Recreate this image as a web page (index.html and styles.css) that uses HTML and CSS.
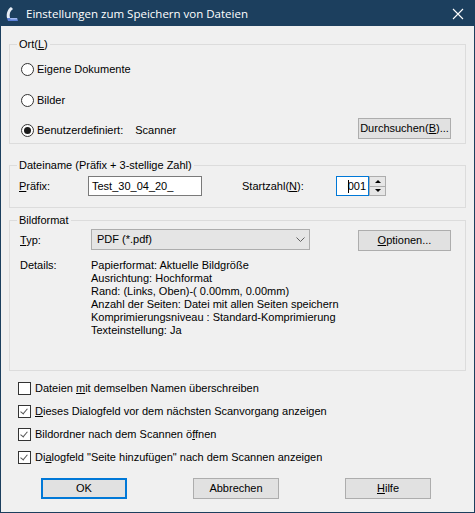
FILE: index.html
```html
<!DOCTYPE html>
<html lang="de">
  <head>
    <meta charset="UTF-8" />
    <meta name="viewport" content="width=device-width, initial-scale=1.0" />
    <title>Einstellungen zum Speichern von Dateien</title>
    <link rel="stylesheet" href="styles.css">
  </head>
  <body>
    <div class="window">
      <div class="titlebar">
        <svg class="app-icon" width="14" height="16" viewBox="0 0 14 16">
          <path d="M6 1 C3 3 1 7 2 12 L5 12 C4 8 5 5 8 3 Z" fill="#e8eef6" />
          <path d="M2 12 L12 12 L13 15 L3 15 Z" fill="#5a7fd6" />
          <path d="M5 12 L12 12 L12.5 13.5 L5.5 13.5 Z" fill="#9fb8ee" />
        </svg>
        <span class="title">Einstellungen zum Speichern von Dateien</span>
        <svg class="close" width="12" height="12" viewBox="0 0 12 12">
          <path d="M1 1 L11 11 M11 1 L1 11" stroke="#fff" stroke-width="1.1" />
        </svg>
      </div>

      <div class="dialog">
        <fieldset class="group group-location">
          <legend>Ort(<u>L</u>)</legend>
          <div class="radio-row first">
            <span class="radio"></span><span>Eigene Dokumente</span>
          </div>
          <div class="radio-row second">
            <span class="radio"></span><span>Bilder</span>
          </div>
          <div class="custom-row">
            <div class="radio-row checked">
              <span class="radio"></span><span>Benutzerdefiniert:</span>
            </div>
            <span class="folder">Scanner</span>
            <span class="btn btn-side"><span>Durchsuchen(<u>B</u>)...</span></span>
          </div>
        </fieldset>

        <fieldset class="group group-name">
          <legend>Dateiname (Präfix + 3-stellige Zahl)</legend>
          <div class="field-row">
            <span class="field-label"><u>P</u>räfix:</span>
            <span class="textbox prefix">Test_30_04_20_</span>
            <span class="start-label">Startzahl(<u>N</u>):</span>
            <span class="textbox spin-value"><span class="caret"></span>001</span>
            <span class="spin-buttons">
              <span class="spin-up"></span>
              <span class="spin-down"></span>
            </span>
          </div>
        </fieldset>

        <fieldset class="group group-format">
          <legend>Bildformat</legend>
          <div class="field-row type-row">
            <span class="field-label type-label"><u>T</u>yp:</span>
            <span class="select">
              <span>PDF (*.pdf)</span>
              <svg class="chevron" width="9" height="5" viewBox="0 0 9 5">
                <path d="M0.5 0.5 L4.5 4.5 L8.5 0.5" fill="none" stroke="#606060" stroke-width="1" />
              </svg>
            </span>
            <span class="btn btn-side"><span><u>O</u>ptionen...</span></span>
          </div>
          <div class="details">
            <span class="field-label type-label">Details:</span>
            <div class="details-text">
              <div>Papierformat: Aktuelle Bildgröße</div>
              <div>Ausrichtung: Hochformat</div>
              <div>Rand: (Links, Oben)-( 0.00mm, 0.00mm)</div>
              <div>Anzahl der Seiten: Datei mit allen Seiten speichern</div>
              <div>Komprimierungsniveau : Standard-Komprimierung</div>
              <div>Texteinstellung: Ja</div>
            </div>
          </div>
        </fieldset>

        <div class="checks">
          <div class="check-row">
            <span class="checkbox"></span><span>Dateien <u>m</u>it demselben Namen überschreiben</span>
          </div>
          <div class="check-row checked">
            <span class="checkbox"></span><span><u>D</u>ieses Dialogfeld vor dem nächsten Scanvorgang anzeigen</span>
          </div>
          <div class="check-row checked">
            <span class="checkbox"></span><span>Bildordner nach dem Scannen ö<u>f</u>fnen</span>
          </div>
          <div class="check-row checked">
            <span class="checkbox"></span><span>Di<u>a</u>logfeld "Seite hinzufügen" nach dem Scannen anzeigen</span>
          </div>
        </div>

        <div class="actions">
          <span class="btn btn-action default">OK</span>
          <span class="btn btn-action">Abbrechen</span>
          <span class="btn btn-action"><span><u>H</u>ilfe</span></span>
        </div>
      </div>
    </div>
  </body>
</html>
```

FILE: styles.css
```css
body {
  margin: 0;
  font-family: 'Liberation Sans', Arial, sans-serif;
  font-size: 11px;
  line-height: 13px;
  color: #000;
}
.window {
  width: 475px;
  height: 513px;
  box-sizing: border-box;
  border: 1px solid #1c3f5e;
  background-color: #f0f0f0;
}
.titlebar {
  height: 25px;
  background-color: #1c3f5e;
  display: flex;
  align-items: center;
  color: #fff;
}
.app-icon {
  margin-left: 4px;
  margin-right: 7px;
}
.title {
  font-family: 'Open Sans', 'Noto Sans', sans-serif;
  font-size: 11.5px;
  flex-grow: 1;
}
.close {
  margin-right: 10px;
}
.dialog {
  padding: 0 8px;
}
u {
  text-decoration: underline;
  text-underline-offset: 1px;
}

/* group boxes */
.group {
  margin: 0;
  border: 1px solid #dcdcdc;
  padding: 0 14px 0 9px;
  min-width: 0;
}
.group legend {
  padding: 0 2px;
  margin-left: -2px;
  line-height: 13px;
}
.group-location {
  margin-top: 12px;
  padding-top: 12px;
  padding-bottom: 4px;
}
.group-name {
  margin-top: 15px;
  padding-top: 4px;
  padding-bottom: 11px;
}
.group-format {
  margin-top: 6px;
  padding-top: 2px;
  padding-bottom: 33px;
}

/* radio buttons */
.radio-row {
  display: flex;
  align-items: center;
  height: 13px;
  margin-left: 2px;
}
.radio-row.second {
  margin-top: 18px;
}
.radio {
  width: 13px;
  height: 13px;
  box-sizing: border-box;
  border: 1px solid #333;
  border-radius: 50%;
  background-color: #fff;
  margin-right: 3px;
  display: flex;
  align-items: center;
  justify-content: center;
}
.radio-row.checked .radio::after {
  content: '';
  width: 7px;
  height: 7px;
  border-radius: 50%;
  background-color: #1a1a1a;
}
.custom-row {
  display: flex;
  align-items: flex-end;
  margin-top: 11px;
}
.custom-row .radio-row {
  margin-bottom: 2px;
}
.folder {
  margin-left: 12px;
  margin-bottom: 2px;
}

/* buttons */
.btn {
  display: flex;
  align-items: center;
  justify-content: center;
  box-sizing: border-box;
  height: 21px;
  border: 1px solid #adadad;
  background-color: #e1e1e1;
}
.btn-side {
  width: 93px;
  margin-left: auto;
}
.btn-action {
  width: 86px;
}
.btn-action.default {
  border: 2px solid #0078d7;
}

/* file name row */
.field-row {
  display: flex;
  align-items: center;
  height: 20px;
}
.field-label {
  width: 69px;
}
.textbox {
  box-sizing: border-box;
  height: 20px;
  border: 1px solid #7a7a7a;
  background-color: #fff;
  display: flex;
  align-items: center;
}
.prefix {
  width: 114px;
  padding-left: 3px;
}
.start-label {
  margin-left: 40px;
  width: 94px;
}
.spin-value {
  width: 33px;
  border-color: #0078d7;
  justify-content: flex-end;
  padding-right: 2px;
}
.caret {
  width: 1px;
  height: 13px;
  background-color: #000;
  margin-right: -1px;
}
.spin-buttons {
  display: flex;
  flex-direction: column;
  width: 17px;
  height: 20px;
  box-sizing: border-box;
  border: 1px solid #adadad;
  background-color: #e6e6e6;
}
.spin-up,
.spin-down {
  flex: 1;
  display: flex;
  align-items: center;
  justify-content: center;
}
.spin-up {
  border-bottom: 1px solid #adadad;
}
.spin-up::after {
  content: '';
  border-left: 3px solid transparent;
  border-right: 3px solid transparent;
  border-bottom: 3px solid #000;
}
.spin-down::after {
  content: '';
  border-left: 3px solid transparent;
  border-right: 3px solid transparent;
  border-top: 3px solid #000;
}

/* image format */
.type-row {
  height: 22px;
  align-items: flex-start;
}
.type-label {
  width: 71px;
  margin-left: 1px;
  align-self: center;
}
.select {
  box-sizing: border-box;
  width: 219px;
  height: 21px;
  border: 1px solid #adadad;
  background-color: #e5e5e5;
  display: flex;
  align-items: center;
  padding-left: 5px;
}
.chevron {
  margin-left: auto;
  margin-right: 4px;
}
.type-row .btn-side {
  margin-top: 1px;
}
.details {
  display: flex;
  margin-top: 8px;
}
.details .type-label {
  align-self: flex-start;
}

/* options below the groups */
.checks {
  margin-top: 11px;
  display: flex;
  flex-direction: column;
  gap: 10px;
}
.check-row {
  display: flex;
  align-items: center;
  height: 13px;
  margin-left: 9px;
}
.checkbox {
  width: 13px;
  height: 13px;
  box-sizing: border-box;
  border: 1px solid #333;
  background-color: #fff;
  margin-right: 4px;
  position: relative;
}
.check-row.checked .checkbox::after {
  content: '';
  position: absolute;
  left: 3px;
  top: 1px;
  width: 3px;
  height: 6px;
  border-right: 1px solid #555;
  border-bottom: 1px solid #555;
  transform: rotate(40deg);
}
.actions {
  display: flex;
  gap: 66px;
  margin-top: 14px;
  padding-left: 32px;
}
```
